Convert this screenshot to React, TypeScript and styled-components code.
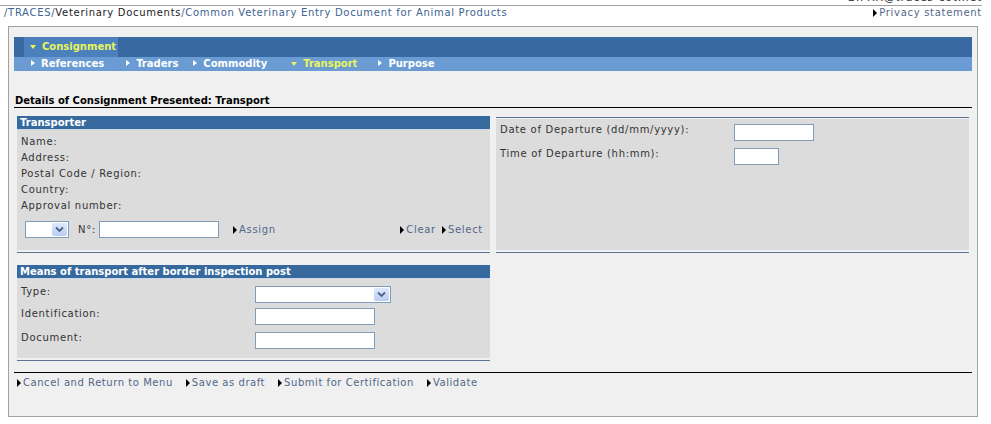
import React from "react";
import styled, { createGlobalStyle, css } from "styled-components";

const GlobalStyle = createGlobalStyle`
  body {
    margin: 0;
    background: #fff;
    font-family: "DejaVu Sans", Verdana, sans-serif;
    font-size: 10px;
    letter-spacing: 0.7px;
    color: #333;
  }
`;

const arrow = (color: string) => css`
  &::before {
    content: "";
    display: inline-block;
    width: 0;
    height: 0;
    border-left: 4px solid ${color};
    border-top: 4px solid transparent;
    border-bottom: 4px solid transparent;
    margin-right: 2px;
    vertical-align: -1px;
  }
`;

const Page = styled.div`
  width: 991px;
`;

const UserStrip = styled.div`
  height: 5px;
  overflow: hidden;
  border-bottom: 1px solid #a0a0a0;
  margin-right: 9px;
  text-align: right;
  & span {
    display: block;
    margin-top: -8px;
    line-height: 12px;
    font-size: 11px;
    color: #333;
  }
`;

const Crumbs = styled.div`
  display: flex;
  justify-content: space-between;
  padding: 1px 9px 0 4px;
  height: 19px;
  line-height: 12px;
`;

const Crumb = styled.span<{ $dark?: boolean }>`
  color: ${(p) => (p.$dark ? "#222" : "#3d6391")};
`;

const Link = styled.a`
  color: #52678a;
  text-decoration: none;
  white-space: nowrap;
  ${arrow("#000")}
`;

const Frame = styled.div`
  margin-left: 8px;
  width: 970px;
  height: 391px;
  border: 1px solid #a3a39b;
  background: #f0f0f0;
  padding: 10px 0 0 5px;
  box-sizing: border-box;
`;

const Nav = styled.div`
  width: 958px;
  letter-spacing: 0;
`;

const NavMain = styled.div`
  height: 20px;
  background: #386aa1;
  padding-left: 10px;
  display: flex;
`;

const NavTab = styled.span`
  background: #4b80bd;
  padding: 0 2px 0 6px;
  line-height: 20px;
  font-weight: bold;
  color: #e9f55b;
`;

const NavSub = styled.div`
  height: 14px;
  background: #6a9bd2;
  display: flex;
  padding-left: 17px;
  line-height: 14px;
`;

const NavItem = styled.span<{ $active?: boolean; $gap?: number }>`
  font-weight: bold;
  margin-left: ${(p) => p.$gap ?? 0}px;
  color: ${(p) => (p.$active ? "#e9f55b" : "#fff")};
  white-space: nowrap;
`;

const Tri = styled.span<{ $down?: boolean }>`
  display: inline-block;
  width: 0;
  height: 0;
  margin-right: 6px;
  vertical-align: 1px;
  ${(p) =>
    p.$down
      ? css`
          border-top: 4px solid currentColor;
          border-left: 3.5px solid transparent;
          border-right: 3.5px solid transparent;
        `
      : css`
          border-left: 4px solid currentColor;
          border-top: 3.5px solid transparent;
          border-bottom: 3.5px solid transparent;
        `}
`;

const Heading = styled.h2`
  margin: 24px 0 0;
  width: 958px;
  font-size: 10px;
  font-weight: bold;
  letter-spacing: 0;
  color: #000;
  line-height: 12px;
  padding-left: 1px;
  border-bottom: 1px solid #000;
  box-sizing: border-box;
`;

const Columns = styled.div`
  display: grid;
  grid-template-columns: 473px 473px;
  column-gap: 6px;
  row-gap: 12px;
  margin: 8px 0 0 3px;
`;

const Section = styled.div`
  padding-bottom: 2px;
  border-bottom: 1px solid #5c7595;
  display: flex;
  flex-direction: column;
`;

const RightSection = styled(Section)`
  border-top: 1px solid #5c7595;
  padding-top: 1px;
  margin-top: 1px;
`;

const SectionHead = styled.div`
  height: 13px;
  line-height: 13px;
  background: #366a9f;
  color: #fff;
  font-weight: bold;
  letter-spacing: 0;
  padding-left: 3px;
  border-bottom: 1px solid #cad8e8;
`;

const Panel = styled.div<{ $pad?: string }>`
  flex: 1;
  background: #dcdcdc;
  padding: ${(p) => p.$pad || "4px 4px 12px"};
`;

const InfoLine = styled.div`
  line-height: 16px;
`;

const AssignRow = styled.div`
  display: flex;
  align-items: center;
  margin-top: 6px;
  padding-left: 4px;
  height: 18px;
`;

const Input = styled.span<{ $w: number; $h?: number }>`
  display: inline-block;
  width: ${(p) => p.$w}px;
  height: ${(p) => p.$h || 17}px;
  background: #fff;
  border: 1px solid #7f9db9;
  box-sizing: border-box;
`;

const Select = styled.span<{ $w: number }>`
  display: inline-flex;
  justify-content: flex-end;
  width: ${(p) => p.$w}px;
  height: 17px;
  background: #fff;
  border: 1px solid #7f9db9;
  box-sizing: border-box;
  padding: 1px;
`;

const SelectBtn = styled.span`
  width: 15px;
  height: 13px;
  background: linear-gradient(#dfe9fb, #b7cdf3);
  border-radius: 2px;
  display: flex;
  align-items: center;
  justify-content: center;
`;

const NoLabel = styled.span`
  margin: 0 3px 0 9px;
`;

const Spacer = styled.span`
  flex: 1;
`;

const LinkGap = styled.span<{ $w: number }>`
  width: ${(p) => p.$w}px;
`;

const FieldRow = styled.div<{ $gap?: number }>`
  display: flex;
  align-items: flex-start;
  height: 17px;
  margin-top: ${(p) => p.$gap ?? 0}px;
`;

const FieldLabel = styled.span<{ $w: number }>`
  width: ${(p) => p.$w}px;
  line-height: 12px;
`;

const Footer = styled.div`
  margin: 11px 0 0;
  width: 955px;
  border-top: 1px solid #000;
  display: flex;
  gap: 13px;
  padding: 3px 0 0 3px;
  line-height: 14px;
  letter-spacing: 0.55px;
`;

const Chevron = () => (
  <svg width="9" height="7" viewBox="0 0 9 7">
    <path d="M1 1.5 L4.5 5 L8 1.5" fill="none" stroke="#4d6185" strokeWidth="1.8" />
  </svg>
);

export default function App() {
  return (
    <Page>
      <GlobalStyle />
      <UserStrip>
        <span>BIPXX@traces-cot.net</span>
      </UserStrip>
      <Crumbs>
        <span>
          <Crumb>/TRACES/</Crumb>
          <Crumb $dark>Veterinary Documents</Crumb>
          <Crumb>/Common Veterinary Entry Document for Animal Products</Crumb>
        </span>
        <Link href="#">Privacy statement</Link>
      </Crumbs>
      <Frame>
        <Nav>
          <NavMain>
            <NavTab>
              <Tri $down />
              Consignment
            </NavTab>
          </NavMain>
          <NavSub>
            <NavItem><Tri />References</NavItem>
            <NavItem $gap={22}><Tri />Traders</NavItem>
            <NavItem $gap={15}><Tri />Commodity</NavItem>
            <NavItem $gap={24} $active><Tri $down />Transport</NavItem>
            <NavItem $gap={21}><Tri />Purpose</NavItem>
          </NavSub>
        </Nav>
        <Heading>Details of Consignment Presented: Transport</Heading>
        <Columns>
          <Section>
            <SectionHead>Transporter</SectionHead>
            <Panel>
              <InfoLine>Name:</InfoLine>
              <InfoLine>Address:</InfoLine>
              <InfoLine>Postal Code / Region:</InfoLine>
              <InfoLine>Country:</InfoLine>
              <InfoLine>Approval number:</InfoLine>
              <AssignRow>
                <Select $w={44}>
                  <SelectBtn><Chevron /></SelectBtn>
                </Select>
                <NoLabel>N°:</NoLabel>
                <Input $w={120} />
                <LinkGap $w={14} />
                <Link href="#">Assign</Link>
                <Spacer />
                <Link href="#">Clear</Link>
                <LinkGap $w={6} />
                <Link href="#">Select</Link>
                <LinkGap $w={3} />
              </AssignRow>
            </Panel>
          </Section>
          <RightSection>
            <Panel $pad="5px 4px">
              <FieldRow>
                <FieldLabel $w={234}>Date of Departure (dd/mm/yyyy):</FieldLabel>
                <Input $w={80} />
              </FieldRow>
              <FieldRow $gap={7}>
                <FieldLabel $w={234}>Time of Departure (hh:mm):</FieldLabel>
                <Input $w={45} />
              </FieldRow>
            </Panel>
          </RightSection>
          <Section>
            <SectionHead>Means of transport after border inspection post</SectionHead>
            <Panel $pad="7px 4px 9px">
              <FieldRow>
                <FieldLabel $w={234}>Type:</FieldLabel>
                <Select $w={136}>
                  <SelectBtn><Chevron /></SelectBtn>
                </Select>
              </FieldRow>
              <FieldRow $gap={5}>
                <FieldLabel $w={234}>Identification:</FieldLabel>
                <Input $w={120} />
              </FieldRow>
              <FieldRow $gap={7}>
                <FieldLabel $w={234}>Document:</FieldLabel>
                <Input $w={120} />
              </FieldRow>
            </Panel>
          </Section>
        </Columns>
        <Footer>
          <Link href="#">Cancel and Return to Menu</Link>
          <Link href="#">Save as draft</Link>
          <Link href="#">Submit for Certification</Link>
          <Link href="#">Validate</Link>
        </Footer>
      </Frame>
    </Page>
  );
}
